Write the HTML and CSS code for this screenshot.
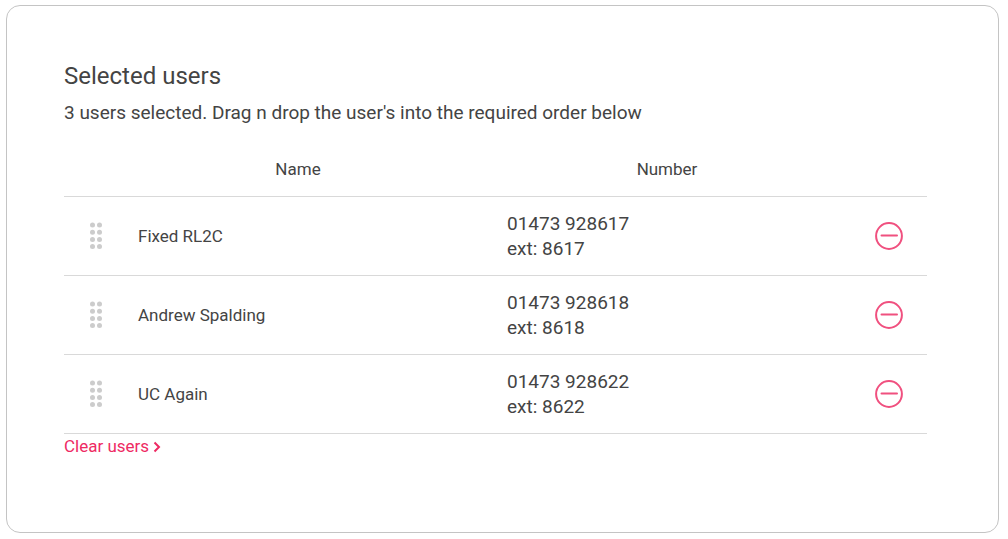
FILE: index.html
```html
<!DOCTYPE html>
<html lang="en">
  <head>
    <meta charset="UTF-8" />
    <meta name="viewport" content="width=device-width, initial-scale=1.0" />
    <title>Selected users</title>
    <link rel="stylesheet" href="styles.css">
  </head>
  <body>
    <svg class="sprite" aria-hidden="true">
      <symbol id="icon-drag" viewBox="0 0 14 28">
        <circle cx="3.5" cy="3" r="2.5" />
        <circle cx="10.5" cy="3" r="2.5" />
        <circle cx="3.5" cy="10.2" r="2.5" />
        <circle cx="10.5" cy="10.2" r="2.5" />
        <circle cx="3.5" cy="17.4" r="2.5" />
        <circle cx="10.5" cy="17.4" r="2.5" />
        <circle cx="3.5" cy="24.6" r="2.5" />
        <circle cx="10.5" cy="24.6" r="2.5" />
      </symbol>
      <symbol id="icon-remove" viewBox="0 0 28 28">
        <circle cx="14" cy="14" r="12.9" />
        <path d="M6.5 13.5h15.5" />
      </symbol>
    </svg>
    <main class="card">
      <h1 class="card-title">Selected users</h1>
      <p class="card-text">3 users selected. Drag n drop the user's into the required order below</p>
      <table class="users">
        <thead>
          <tr>
            <th class="col-drag"></th>
            <th>Name</th>
            <th>Number</th>
            <th class="col-remove"></th>
          </tr>
        </thead>
        <tbody>
          <tr draggable="true">
            <td class="col-drag"><svg class="drag"><use href="#icon-drag" /></svg></td>
            <td>Fixed RL2C</td>
            <td class="number">01473 928617<br />ext: 8617</td>
            <td class="col-remove">
              <button class="remove" type="button" aria-label="Remove Fixed RL2C"><svg><use href="#icon-remove" /></svg></button>
            </td>
          </tr>
          <tr draggable="true">
            <td class="col-drag"><svg class="drag"><use href="#icon-drag" /></svg></td>
            <td>Andrew Spalding</td>
            <td class="number">01473 928618<br />ext: 8618</td>
            <td class="col-remove">
              <button class="remove" type="button" aria-label="Remove Andrew Spalding"><svg><use href="#icon-remove" /></svg></button>
            </td>
          </tr>
          <tr draggable="true">
            <td class="col-drag"><svg class="drag"><use href="#icon-drag" /></svg></td>
            <td>UC Again</td>
            <td class="number">01473 928622<br />ext: 8622</td>
            <td class="col-remove">
              <button class="remove" type="button" aria-label="Remove UC Again"><svg><use href="#icon-remove" /></svg></button>
            </td>
          </tr>
        </tbody>
      </table>
      <a class="clear" href="#">Clear users
        <svg viewBox="0 0 8 12"><path d="M1.5 1.5L6 6l-4.5 4.5" /></svg>
      </a>
    </main>
  </body>
</html>
```
FILE: styles.css
```css
* {
  box-sizing: border-box;
}
body {
  margin: 0;
  padding: 5px 9px 6px 6px;
  min-height: 100vh;
  display: flex;
  background-color: #fff;
  color: #444;
  font-family: Roboto, "Liberation Sans", sans-serif;
}
.sprite {
  display: none;
}
.card {
  flex: 1;
  padding: 54px 71px 54px 57px;
  border: 1px solid #c4c4c4;
  border-radius: 14px;
}
.card-title {
  margin: 0;
  font-size: 24px;
  font-weight: 400;
  line-height: 32px;
}
.card-text {
  margin: 8px 0 0;
  font-size: 19px;
  line-height: 25px;
}
.users {
  width: 100%;
  margin-top: 18px;
  table-layout: fixed;
  border-collapse: separate;
  border-spacing: 0;
  font-size: 17px;
}
.users th,
.users td {
  padding: 14px 41px 14px 8px;
  border-bottom: 1px solid #d9d9d9;
  line-height: 25px;
}
.users th {
  font-weight: 400;
  text-align: center;
}
.users .number {
  font-size: 19px;
}
.users .col-drag {
  width: 66px;
  padding: 0 2px 0 0;
}
.users .col-remove {
  width: 59px;
  padding: 0 0 0 7px;
}
.drag {
  display: block;
  width: 14px;
  height: 28px;
  margin: 0 auto;
  fill: #ccc;
  cursor: move;
}
.remove {
  display: block;
  padding: 0;
  border: none;
  background: none;
  cursor: pointer;
}
.remove svg {
  display: block;
  width: 28px;
  height: 28px;
  fill: none;
  stroke: #f0507f;
  stroke-width: 2;
  stroke-linecap: round;
}
.clear {
  display: inline-flex;
  align-items: center;
  gap: 4px;
  color: #ee2a63;
  font-size: 17px;
  line-height: 25px;
  text-decoration: none;
}
.clear svg {
  width: 8px;
  height: 12px;
  fill: none;
  stroke: currentColor;
  stroke-width: 2;
}
```
